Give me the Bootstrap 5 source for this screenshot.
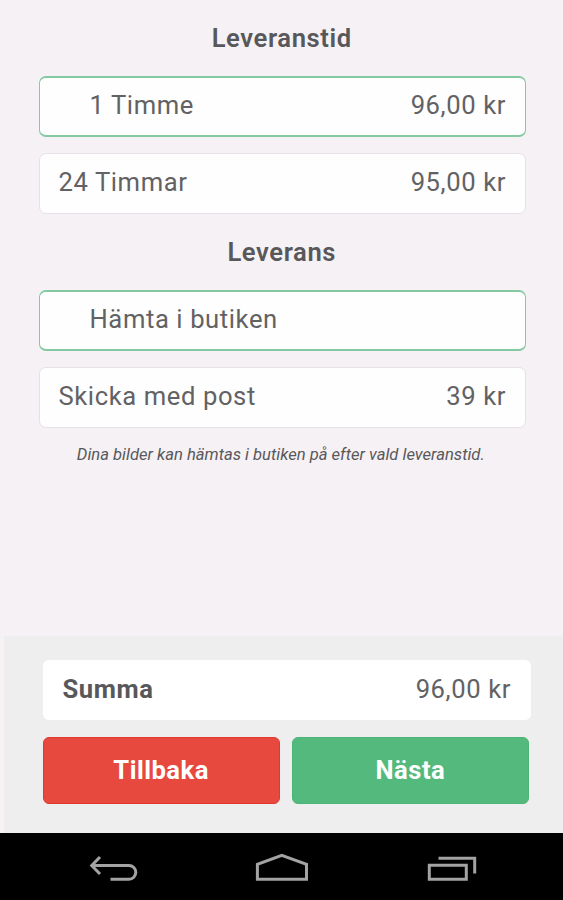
<!DOCTYPE html>
<html lang="sv">
<head>
<meta charset="utf-8">
<meta name="viewport" content="width=device-width, initial-scale=1">
<title>Leverans</title>
<link rel="stylesheet" href="https://cdn.jsdelivr.net/npm/bootstrap@5.3.0/dist/css/bootstrap.min.css">
<style>
body { font-family: Roboto, sans-serif; background: #f6f1f5; color: #58585a; height: 900px; overflow: hidden; font-size: 25.6px; letter-spacing: .6px; }
main { padding: 0 37px 0 38.5px; }
.section-title { font-size: 25.6px; font-weight: 600; height: 76px; line-height: 76px; letter-spacing: .6px; padding-right: 1px; }
.option { height: 61px; padding: 0 19px 1px 19px; border: 1px solid #e6e1e6; border-radius: 7px; background: #fefefe; color: #626264; }
.option span { line-height: 1; }
.option.chosen { border-color: #84c9a2; border-width: 2px 1px; padding-left: 50px; }
.option + .option { margin-top: 16px; }
.note { font-size: 16.6px; line-height: 20px; letter-spacing: 0; margin-top: 17px; padding-right: 3px; }
.summary { height: 197px; margin-left: 4px; padding: 24px 32px 29px 38.500px; background: #eeeeee; }
.total { height: 60px; padding: 0 20px 1px 20px; border-radius: 6px; }
.total .sum { color: #626264; }
.actions { gap: 12px; margin-right: 2px; }
.action { height: 67px; border-radius: 6px; color: #fff; font-size: 25.6px; font-weight: 700; letter-spacing: .5px; padding: 0; flex: 1 1 0; }
.action.back { background: #e8493f; border: 1px solid #e03a2f; }
.action.next { background: #53b97c; border: 1px solid #4bb577; }
.system-bar { height: 67px; }
.system-bar svg { display: block; }
</style>
<script src="https://cdn.jsdelivr.net/npm/bootstrap@5.3.0/dist/js/bootstrap.bundle.min.js"></script>
</head>
<body class="d-flex flex-column">
<main class="flex-grow-1">
  <h2 class="section-title text-center mb-0">Leveranstid</h2>
  <div class="option chosen d-flex align-items-center justify-content-between"><span>1 Timme</span><span>96,00 kr</span></div>
  <div class="option d-flex align-items-center justify-content-between"><span>24 Timmar</span><span>95,00 kr</span></div>
  <h2 class="section-title text-center mb-0">Leverans</h2>
  <div class="option chosen d-flex align-items-center justify-content-between"><span>Hämta i butiken</span></div>
  <div class="option d-flex align-items-center justify-content-between"><span>Skicka med post</span><span>39 kr</span></div>
  <p class="note fst-italic text-center mb-0">Dina bilder kan hämtas i butiken på efter vald leveranstid.</p>
</main>
<section class="summary d-flex flex-column justify-content-between">
  <div class="total bg-white d-flex align-items-center justify-content-between"><span class="fw-bold">Summa</span><span class="sum">96,00 kr</span></div>
  <div class="actions d-flex">
    <button type="button" class="btn action back">Tillbaka</button>
    <button type="button" class="btn action next">Nästa</button>
  </div>
</section>
<nav class="system-bar bg-black" aria-label="System">
  <svg width="563" height="67" viewBox="0 833 563 67" fill="none" stroke="#a3a3a3" stroke-width="3">
    <path d="M91.500 865.500H129a6.800 6.800 0 0 1 0 13.700H110.500M100 857l-8.300 8.500 8.300 8.500"/>
    <path d="M257.400 879.200V864.300L281.800 855.300 306.500 864.300V879.200Z"/>
    <path d="M429.300 865.300H466.300V879.200H429.300ZM438.500 858.300H474.700V873.500"/>
  </svg>
</nav>
</body>
</html>
